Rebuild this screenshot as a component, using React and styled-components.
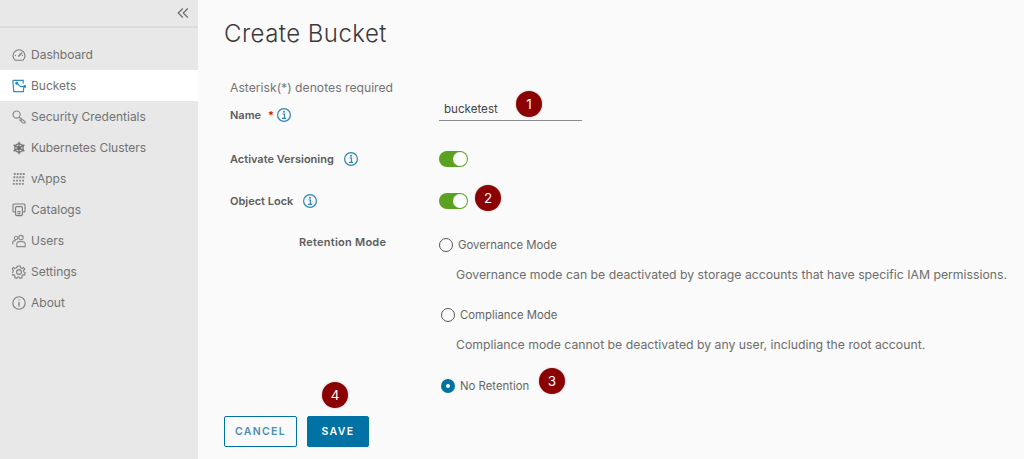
import styled, { createGlobalStyle } from "styled-components";

const GlobalStyle = createGlobalStyle`
  html, body {
    margin: 0;
    padding: 0;
    height: 100%;
    overflow: hidden;
    background: #fafafa;
  }
  #root { height: 100%; }
  * { box-sizing: border-box; }
`;

const Page = styled.div`
  display: flex;
  width: 1024px;
  height: 459px;
  font-family: "Inter", "Liberation Sans", sans-serif;
  color: #565656;
`;

const Sidebar = styled.aside`
  width: 198px;
  flex: none;
  background: #e8e8e8;
`;

const CollapseBar = styled.div`
  height: 28px;
  display: flex;
  align-items: center;
  justify-content: flex-end;
  padding-right: 9px;
  border-bottom: 2px solid #dcdcdc;
`;

const Nav = styled.nav`
  padding-top: 11px;
`;

const NavItem = styled.div`
  height: 31px;
  display: flex;
  align-items: center;
  gap: 5px;
  padding-left: 12px;
  font-size: 12px;
  color: #727272;
  background: ${(p) => (p.$active ? "#fff" : "transparent")};
`;

const Main = styled.main`
  position: relative;
  flex: 1;
  padding: 19px 0 0 26px;
`;

const Title = styled.h1`
  margin: 0;
  height: 30px;
  line-height: 30px;
  font-size: 24px;
  font-weight: 300;
  letter-spacing: 0.45px;
  color: #3a3a3a;
`;

const Hint = styled.div`
  margin: 29px 0 0 6px;
  height: 20px;
  line-height: 20px;
  font-size: 12.2px;
  color: #747474;
`;

const Row = styled.div`
  display: grid;
  grid-template-columns: 209px 1fr;
  align-items: center;
  height: ${(p) => p.$h}px;
  margin-top: ${(p) => p.$gap || 0}px;
  margin-left: 6px;
`;

const Label = styled.label`
  display: flex;
  align-items: center;
  gap: ${(p) => p.$gap || 10}px;
  margin-top: ${(p) => p.$drop || 0}px;
  font-size: 11px;
  font-weight: 600;
  color: #5c5c5c;
`;

const Required = styled.span`
  color: #c92100;
  margin-right: -4px;
`;

const NameInput = styled.div`
  width: 143px;
  height: 23px;
  display: flex;
  align-items: center;
  padding-left: 5px;
  font-size: 11.6px;
  color: #444;
  border-bottom: 1px solid #8a8a8a;
`;

const Toggle = styled.span`
  position: relative;
  display: block;
  width: 29px;
  height: 16px;
  border-radius: 8px;
  background: #5aa220;

  &::after {
    content: "";
    position: absolute;
    right: 1px;
    top: 1px;
    width: 14px;
    height: 14px;
    border-radius: 50%;
    background: #fff;
  }
`;

const RetentionBlock = styled.div`
  display: grid;
  grid-template-columns: 215px 1fr;
  margin-top: 27px;
`;

const RetentionLabel = styled(Label)`
  height: 14px;
  margin-top: -1px;
  padding-left: 75px;
  letter-spacing: 0.25px;
`;

const RadioRow = styled.div`
  display: flex;
  align-items: center;
  gap: 5px;
  height: 18px;
  margin-top: ${(p) => p.$gap || 0}px;
  margin-left: ${(p) => p.$shift || 0}px;
  font-size: 11.35px;
  color: #666;
`;

const Radio = styled.span`
  width: 14px;
  height: 14px;
  flex: none;
  border-radius: 50%;
  background: ${(p) => (p.$checked ? "#fff" : "transparent")};
  border: ${(p) => (p.$checked ? "5px solid #0072a3" : "1px solid #555")};
`;

const Description = styled.div`
  margin: 13px 0 0 17px;
  height: 16px;
  line-height: 16px;
  font-size: 12.25px;
  color: #6d6d6d;
  white-space: nowrap;
`;

const Actions = styled.div`
  display: flex;
  gap: 10px;
  margin-top: 21px;
`;

const Button = styled.button`
  height: 31px;
  padding: 0;
  width: ${(p) => p.$w}px;
  font-family: inherit;
  font-size: 10.5px;
  font-weight: 600;
  letter-spacing: 1.35px;
  border-radius: 2px;
  border: 1px solid #0072a3;
  color: ${(p) => (p.$primary ? "#fff" : "#4d8fae")};
  background: ${(p) => (p.$primary ? "#0072a3" : "transparent")};
`;

const Badge = styled.span`
  position: absolute;
  left: ${(p) => p.$x - 198 - 13}px;
  top: ${(p) => p.$y - 13}px;
  width: 26px;
  height: 26px;
  border-radius: 50%;
  background: #8b0000;
  color: #fff;
  font-size: 13.5px;
  display: flex;
  align-items: center;
  justify-content: center;
  box-shadow: 0 0 2px rgba(0, 0, 0, 0.3);
`;

const Ico = ({ children, color = "#7d7d7d", size = 14, width = 1.1 }) => (
  <svg width={size} height={size} viewBox="0 0 14 14" fill="none" stroke={color} strokeWidth={width} style={{ flex: "none" }}>
    {children}
  </svg>
);

const InfoIcon = () => (
  <svg width="14" height="14" viewBox="0 0 14 14" fill="none" style={{ flex: "none" }}>
    <circle cx="7" cy="7" r="6.4" stroke="#2f86ae" strokeWidth="1.2" />
    <path d="M5.5 6h2v4.2M5 10.4h4.2" stroke="#2f86ae" strokeWidth="1.2" />
    <circle cx="7" cy="3.8" r="1" fill="#2f86ae" />
  </svg>
);

const navItems = [
  {
    label: "Dashboard",
    icon: (
      <Ico>
        <path d="M3 12.2a5.9 5.9 0 0 1-2-4.4 6 6 0 0 1 12 0c0 1.8-.8 3.4-2 4.4Z" />
        <path d="M6.4 8.6 10 4.8" strokeWidth="1.4" />
        <path d="M3 7.5h1M10 7.5h1" />
      </Ico>
    ),
  },
  {
    label: "Buckets",
    active: true,
    icon: (
      <Ico color="#2f8fbb" width={1.2}>
        <path d="M.8 1.4h10.4v3M.8 1.4l1 11.2h9.6l.4-4.6" />
        <path d="M5 4.4 8.6 7.6l4-.2" />
        <circle cx="4.8" cy="4.2" r="1" fill="#2f8fbb" />
        <circle cx="12.8" cy="7.4" r="0.8" fill="#2f8fbb" />
      </Ico>
    ),
  },
  {
    label: "Security Credentials",
    icon: (
      <Ico color="#8a8a8a" width={1.2}>
        <circle cx="4.6" cy="4.6" r="3.6" />
        <path d="M7.2 7.2 13 11.6V13h-2.2L9.2 11.6V10.4H8V9.2" />
      </Ico>
    ),
  },
  {
    label: "Kubernetes Clusters",
    icon: (
      <Ico color="#6f6f6f" width={1.3}>
        <circle cx="7" cy="7" r="4.2" />
        <circle cx="7" cy="7" r="1.4" fill="#6f6f6f" />
        <path d="M7 .8v12.4M1.6 3.9l10.8 6.2M12.4 3.9 1.6 10.1" />
      </Ico>
    ),
  },
  {
    label: "vApps",
    icon: (
      <Ico color="#8a8a8a">
        <path d="M1.8 2h11M1.4 5.3h11M1.1 8.6h11M.8 11.9h11" strokeWidth="1.9" strokeDasharray="1.9 1.1" />
      </Ico>
    ),
  },
  {
    label: "Catalogs",
    icon: (
      <Ico>
        <rect x="3.6" y="3.6" width="6.8" height="9" rx="1" />
        <path d="M3.4 9H1.8a.8.8 0 0 1-.8-.8V2a1 1 0 0 1 1-1h10a1 1 0 0 1 1 1v6.2a.8.8 0 0 1-.8.8h-1.6" />
        <path d="M5.4 8.6h3.2M5.4 10.6h3.2" />
      </Ico>
    ),
  },
  {
    label: "Users",
    icon: (
      <Ico color="#8a8a8a">
        <circle cx="9" cy="3.6" r="2.2" />
        <circle cx="4" cy="4" r="1.7" />
        <path d="M4.8 12.6V9.8c0-1.4 1.8-2.4 4.2-2.4s4.2 1 4.2 2.4v2.8Z" />
        <path d="M.8 10.4V8.4c0-1 1.2-1.8 3-1.8" />
      </Ico>
    ),
  },
  {
    label: "Settings",
    icon: (
      <Ico>
        <circle cx="7" cy="7" r="2.4" />
        <path d="M5.9 1h2.2l.4 1.7 1.5.7 1.5-.9 1.2 1.6-1.2 1.3.3 1.6 1.5.9-.6 2-1.8-.1-1 1.2.2 1.7-2 .7-1-1.4h-1.4l-1 1.4-2-.7.2-1.7-1-1.2-1.8.1-.6-2 1.5-.9.3-1.6-1.2-1.3 1.2-1.6 1.5.9 1.5-.7Z" />
      </Ico>
    ),
  },
  {
    label: "About",
    icon: (
      <Ico>
        <circle cx="7" cy="7" r="6.2" />
        <path d="M7 6v4.6" strokeWidth="1.3" />
        <circle cx="7" cy="3.9" r="0.7" fill="#7d7d7d" stroke="none" />
      </Ico>
    ),
  },
];

export default function App() {
  return (
    <>
      <GlobalStyle />
      <Page>
        <Sidebar>
          <CollapseBar>
            <svg width="12" height="12" viewBox="0 0 12 12" fill="none" stroke="#666" strokeWidth="1.1">
              <path d="M5.8 1.5 1.2 6l4.6 4.5M10.8 1.5 6.2 6l4.6 4.5" />
            </svg>
          </CollapseBar>
          <Nav>
            {navItems.map((item) => (
              <NavItem key={item.label} $active={item.active}>
                {item.icon}
                {item.label}
              </NavItem>
            ))}
          </Nav>
        </Sidebar>
        <Main>
          <Title>Create Bucket</Title>
          <Hint>Asterisk(*) denotes required</Hint>
          <Row $h={23} $gap={-1}>
            <Label $gap={7} $drop={11}>
              Name <Required>*</Required> <InfoIcon />
            </Label>
            <NameInput>bucketest</NameInput>
          </Row>
          <Row $h={16} $gap={31}>
            <Label>
              Activate Versioning <InfoIcon />
            </Label>
            <Toggle />
          </Row>
          <Row $h={16} $gap={26}>
            <Label>
              Object Lock <InfoIcon />
            </Label>
            <Toggle />
          </Row>
          <RetentionBlock>
            <RetentionLabel>Retention Mode</RetentionLabel>
            <div>
              <RadioRow>
                <Radio />
                Governance Mode
              </RadioRow>
              <Description>Governance mode can be deactivated by storage accounts that have specific IAM permissions.</Description>
              <RadioRow $gap={23} $shift={2}>
                <Radio />
                Compliance Mode
              </RadioRow>
              <Description>Compliance mode cannot be deactivated by any user, including the root account.</Description>
              <RadioRow $gap={24} $shift={2}>
                <Radio $checked />
                No Retention
              </RadioRow>
            </div>
          </RetentionBlock>
          <Actions>
            <Button $w={73}>CANCEL</Button>
            <Button $w={62} $primary>SAVE</Button>
          </Actions>
          <Badge $x={529} $y={104}>1</Badge>
          <Badge $x={488} $y={198}>2</Badge>
          <Badge $x={552} $y={381}>3</Badge>
          <Badge $x={335} $y={395}>4</Badge>
        </Main>
      </Page>
    </>
  );
}
